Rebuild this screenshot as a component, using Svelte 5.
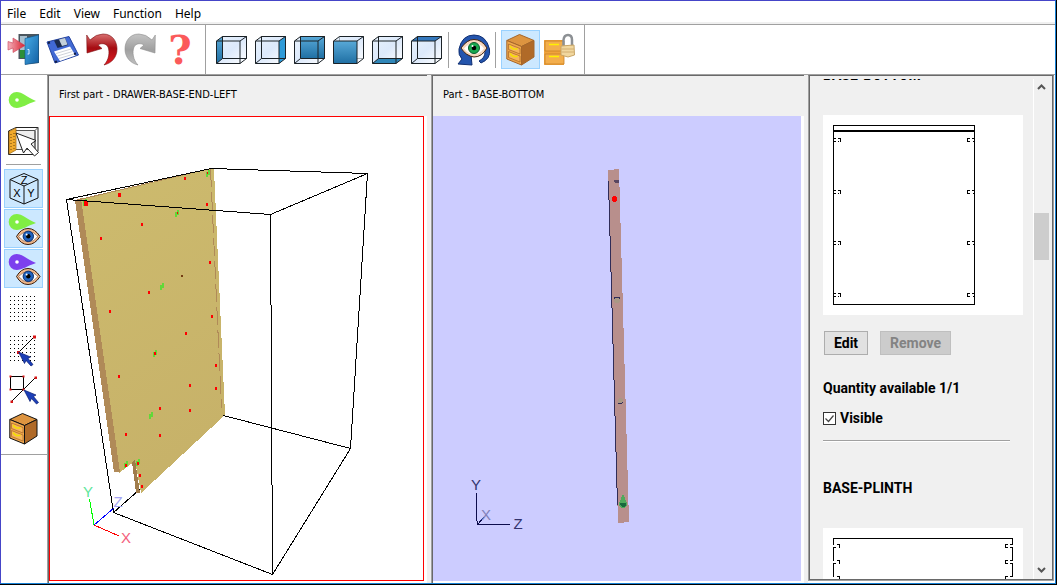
<style>
:global(body) {
  margin: 0;
}

.desktop {
  box-sizing: border-box;
  height: 100vh;
  padding: 0 1px 1px 0;
  background: #000;
  overflow: hidden;
}

.window {
  box-sizing: border-box;
  height: 100%;
  display: flex;
  flex-direction: column;
  border: 1px solid #4545c8;
  border-right-color: #1883d7;
  border-bottom-color: #1883d7;
  background: #fff;
  color: #000;
  font-family: 'Noto Sans', 'Open Sans', sans-serif;
  font-size: 12px;
}

button {
  box-sizing: border-box;
  margin: 0;
  font: inherit;
  color: inherit;
}

.menu {
  display: flex;
  gap: 13px;
  flex: none;
  align-items: center;
  box-sizing: border-box;
  height: 23px;
  padding: 4px 6px 0;
  border-bottom: 2px solid #f0f0f0;
}

.menu button {
  padding: 0;
  border: 0;
  background: none;
  line-height: 16px;
}

.toolbar {
  display: flex;
  flex: none;
  align-items: center;
  box-sizing: border-box;
  height: 51px;
  border-top: 1px solid #a0a0a0;
  border-bottom: 1px solid #a0a0a0;
}

.group {
  display: flex;
  align-items: center;
  align-self: stretch;
  padding: 0 5px 0 6px;
  border-right: 1px solid #a0a0a0;
}

.group:first-child {
  padding: 0 6px 0 3px;
}

.divider {
  width: 1px;
  height: 36px;
  margin: 0 5px 0 2px;
  background: #a0a0a0;
}

.tool {
  display: flex;
  width: 39px;
  height: 39px;
  padding: 3px;
  border: 1px solid transparent;
  background: none;
}

.tool.active {
  border-color: #99d1ff;
  background: #cce8ff;
}

.tool svg {
  width: 31px;
  height: 31px;
  overflow: visible;
}

.question {
  font: bold 40px 'DejaVu Serif', serif;
  text-anchor: middle;
  fill: #fb5a5a;
}

.axis {
  font: 11px 'Liberation Sans', sans-serif;
  text-anchor: middle;
}

main {
  display: grid;
  grid-template-columns: 46px minmax(0, 380fr) 4px minmax(0, 373fr) 4px 247px;
  grid-template-rows: minmax(0, 1fr);
  flex: 1;
  min-height: 0;
}

.side {
  display: flex;
  flex-direction: column;
  gap: 1px;
  align-self: start;
  padding: 6px 3px;
  border-bottom: 1px solid #a0a0a0;
}

.side hr {
  width: 35px;
  margin: 3px 2px;
  border: 0;
  border-top: 1px solid #a0a0a0;
}

.gutter {
  background: #f0f0f0;
}

.panel {
  display: flex;
  flex-direction: column;
  min-height: 0;
  padding: 0 0 2px;
  border-top: 1px solid #696969;
  border-left: 1px solid #a0a0a0;
  box-shadow: inset 1px 0 #696969;
}

.panel h2 {
  flex: none;
  height: 40px;
  box-sizing: border-box;
  margin: 0 0 0 1px;
  padding: 9px 10px;
  background: #f0f0f0;
  font-family: 'DejaVu Sans Condensed', 'DejaVu Sans', sans-serif;
  font-size: 11px;
  font-weight: 400;
  line-height: 20px;
  white-space: nowrap;
}

.view {
  flex: 1;
  min-height: 0;
  margin: 0 3px 0 1px;
}

.view svg {
  display: block;
  width: 100%;
  height: 100%;
}

.view.selected {
  border: 1px solid #f00;
}

.view.lilac {
  background: #ccf;
}

.view text {
  font: 15px 'Liberation Sans', sans-serif;
  text-anchor: middle;
}

.parts {
  display: flex;
  min-height: 0;
  margin: 0 1px 2px 0;
  border: 1px solid #a0a0a0;
  border-top-color: #696969;
  box-shadow: inset 1px 0 #696969, inset -1px -1px #696969;
  background: #f0f0f0;
}

.list {
  flex: 1;
  min-width: 0;
  margin: 3px 0 1px 3px;
  padding: 0 11px;
  overflow-y: scroll;
  scrollbar-width: none;
  border-right: 1px solid #fff;
  font-family: Roboto, 'Liberation Sans', sans-serif;
  font-size: 14px;
  font-weight: 700;
  line-height: 16px;
}

.list h3 {
  margin: 0 0 32px;
  font-size: 14px;
}

.drawing {
  display: block;
  width: 200px;
  height: 200px;
  background: #fff;
}

.actions {
  display: flex;
  gap: 12px;
  margin: 16px 1px 25px;
}

.actions button {
  height: 24px;
  padding: 0 9px;
  border: 1px solid #adadad;
  background: #e1e1e1;
  line-height: 16px;
}

.actions button:disabled {
  border-color: #bfbfbf;
  background: #ccc;
  color: #838383;
}

.list p {
  margin: 0 0 14px;
}

.list label {
  display: flex;
  gap: 4px;
  align-items: center;
}

.list input {
  appearance: none;
  width: 13px;
  height: 13px;
  margin: 0;
  border: 1px solid #333;
  background: #fff;
}

.list input:checked {
  background: #fff url("data:image/svg+xml,%3Csvg xmlns='http://www.w3.org/2000/svg' viewBox='0 0 11 11'%3E%3Cpath d='M1.5 5.5l3 3 5-6' fill='none' stroke='%23444' stroke-width='1.2'/%3E%3C/svg%3E");
}

.list hr {
  margin: 14px 12px 38px 0;
  border: 0;
  border-top: 1px solid #a0a0a0;
  border-bottom: 1px solid #fff;
}

.scroll {
  display: grid;
  grid-template-rows: 17px 118fr 47px 301fr 17px;
  flex: none;
  width: 15px;
  margin: 2px 4px 2px 0;
}

.scroll i {
  background: #cdcdcd;
}

.scroll button {
  display: flex;
  align-items: center;
  justify-content: center;
  padding: 0;
  border: 0;
  background: none;
}

.scroll svg {
  width: 9px;
  height: 8px;
}
</style>

<script>
import { onMount } from 'svelte';

const menus = ['File', 'Edit', 'View', 'Function', 'Help'];

const fileTools = ['exit', 'save', 'undo', 'redo', 'help'];

const cubeFaces = {
  left: { points: '.5,7 6.5,2.5 6.5,24.5 .5,29.5', fill: 'url(#deep)' },
  right: { points: '24,7 30.5,2.5 30.5,24.5 24,29.5', fill: '#2f9bd8' },
  back: { points: '6.5,2.5 30.5,2.5 30.5,24.5 6.5,24.5', fill: 'url(#deep)' },
  front: { points: '.5,7 24,7 24,29.5 .5,29.5', fill: 'url(#deep)' },
  bottom: { points: '.5,29.5 6.5,24.5 30.5,24.5 24,29.5', fill: '#2f86b8' },
  top: { points: '.5,7 6.5,2.5 30.5,2.5 24,7', fill: '#3478bd' }
};

const sideTools = [
  { name: 'drill' },
  { name: 'pick-face', last: true },
  { name: 'axes', active: true },
  { name: 'show-drill', active: true },
  { name: 'show-other', active: true },
  { name: 'grid' },
  { name: 'snap-grid' },
  { name: 'snap-points' },
  { name: 'cabinet-outlined' }
];

const steps = [0, 4, 8, 12, 16, 20, 24];

const greenHoles = [
  [85, 202], [208, 173], [177, 213], [162, 286], [155, 353],
  [151, 415], [126, 464], [138, 462]
];

const redHoles = [
  [85, 202, 4], [119, 194, 3], [185, 178], [207, 204], [142, 224], [101, 238],
  [210, 262], [149, 292], [110, 311], [212, 316], [186, 333],
  [155, 353], [119, 376], [216, 365], [216, 388], [190, 385], [160, 408],
  [190, 410], [126, 434], [160, 435], [126, 465], [138, 463], [140, 475],
  [142, 486], [178, 213, 1], [208, 173, 1]
];

let list;
let visible = true;

onMount(() => {
  list.scrollTop = 12;
});
</script>

{#snippet tear(color, cy)}
  <path d="M8.7 {cy - 8}C14 {cy - 8} 19 {cy - 3} 28 {cy + 1}C19 {cy + 4} 14 {cy + 8} 8.7 {cy + 8}A8 8 0 0 1 8.7 {cy - 8}Z" fill={color} />
  <circle cx="9" cy={cy} r="1.8" fill="#fff" />
{/snippet}

{#snippet eye()}
  <path d="M8.5 23.5Q13 15.5 20 15.5Q27 15.5 32 23.5Q27 31.5 20 31.5Q13 31.5 8.5 23.5Z" fill="#f2b98c" stroke="#3a1c0a" />
  <path d="M10.5 23.5Q15 18.5 20 18.5Q26 18.5 30 23.5Q26 29 20 29Q15 29 10.5 23.5Z" fill="#fff" stroke="#6b3a1c" stroke-width=".6" />
  <circle cx="20.3" cy="23.3" r="5.2" fill="#1f63c0" stroke="#0b2a66" />
  <circle cx="20.3" cy="23.3" r="2.2" />
  <circle cx="18.6" cy="21.5" r="1" fill="#fff" />
{/snippet}

{#snippet cabinet(line)}
  <g stroke={line} stroke-linejoin="round">
    <path d="M1.8 6.5L14.5.5L29 6.5L16.5 12.5Z" fill="#dd9440" />
    <path d="M1.8 6.5L16.5 12.5V31L1.8 25Z" fill="#f0a84e" />
    <path d="M29 6.5L16.5 12.5V31L29 23Z" fill="#b06a28" />
  </g>
  <path d="M3.5 10L15 14.5V20L3.5 15.5ZM3.5 17.5L15 22V28L3.5 23.5Z" fill="#f6b45e" stroke="#a86424" stroke-width=".7" />
  <path d="M5 12Q8 16.5 12.5 14.5M5 19.5Q8 24 12.5 22" fill="none" stroke="#f5e000" stroke-width="1.4" />
{/snippet}

{#snippet pointer(x, y)}
  <path transform="translate({x} {y})" d="M0 0L12 5L9.5 6.5L14.5 12.5L12.5 14L7.5 8.5L6 11.5Z" fill="#1c3fb8" stroke="#0a1c70" stroke-width=".7" />
{/snippet}

{#snippet dots()}
  {#each steps as x}
    {#each steps as y}
      <rect x={x + 2} y={y + 3} width="1" height="1" />
    {/each}
  {/each}
{/snippet}

{#snippet icon(name)}
  <svg viewBox="0 0 31 31" aria-hidden="true">
    {#if name === 'exit'}
      <path d="M10.5 0H31V29L17 30.5V25H10.5Z" fill="#4b565e" />
      <path d="M12 2H19V16H12Z" fill="#a9c0cf" />
      <path d="M12 16H17V24H12Z" fill="#2c8f38" />
      <path d="M17 4.5L30.5 1V28.5L17 30.5Z" fill="url(#door)" stroke="#0f5288" stroke-width=".6" />
      <path d="M19.5 15.5H21V20H19.5" fill="none" stroke="#d8efff" />
      <path d="M0 7.5L5 9V4L17 11.5L5 18.5V14L0 16Z" fill="url(#arrow)" stroke="#c94055" stroke-width=".6" />
    {:else if name === 'save'}
      <path d="M0 8L22 2.5L31.5 21L8 29Z" fill="#4169d4" stroke="#2443a0" />
      <path d="M7 6.5L18 4L21 11L10.5 14Z" fill="#1b2b4e" />
      <path d="M12 5.5L18 4L20.5 10.5L15 12Z" fill="#c3d0da" />
      <path d="M7 17.5L23 12.5L28.5 21.5L13 27Z" fill="#fff" />
      <path d="M9 19.5L24 15M10.5 22L25.5 17.5M12 24.5L27 20" stroke="#b9bfc9" stroke-width=".7" />
      <path d="M1 9l2-.5M27 20l2-.5M8 28l2-.6" stroke="#101c44" stroke-width="2" />
    {:else if name === 'undo'}
      <path d="M.7 1L4 6Q10 0 17 0C27 0 31 8 31 15C31 23 26 29 18 31C23 26 24 18 22 13C20 9 15 9 12 11L16 14.5L1 19Z" fill="url(#red)" stroke="#7c0d10" stroke-width=".6" />
    {:else if name === 'redo'}
      <path transform="translate(31) scale(-1 1)" d="M.7 1L4 6Q10 0 17 0C27 0 31 8 31 15C31 23 26 29 18 31C23 26 24 18 22 13C20 9 15 9 12 11L16 14.5L1 19Z" fill="url(#grey)" stroke="#8d8d8d" stroke-width=".6" />
    {:else if name === 'help'}
      <text class="question" x="16" y="30">?</text>
    {:else if cubeFaces[name]}
      <path d="M.5 7L6.5 2.5H30.5V24.5L24 29.5H.5Z" fill="url(#pale)" />
      <polygon points={cubeFaces[name].points} fill={cubeFaces[name].fill} />
      <path d="M6.5 2.5H30.5V24.5H6.5ZM.5 29.5L6.5 24.5" fill="none" stroke="#1b2227" opacity={name === 'front' ? 0.35 : 1} />
      {#if name === 'front'}
        <polygon points={cubeFaces.front.points} fill="url(#deep)" />
      {/if}
      <path d="M.5 7H24V29.5H.5ZM.5 7L6.5 2.5H30.5L24 7M30.5 2.5V24.5L24 29.5" fill="none" stroke="#1b2227" />
    {:else if name === 'look'}
      <path d="M1 15Q4 1 16 1Q28 1 31.5 15Q33 25 23 29L21 27Q27 24 27 18L16 7L7 13L8 20L13 21L14 31L0 30L4 25Q0 21 1 15Z" fill="#2455ad" stroke="#102f72" />
      <path d="M3 14Q9 5.5 16 5.5Q24 5.5 29 14Q24 23 16 23Q8 22 3 14Z" fill="#f6d7bd" stroke="#43240e" />
      <path d="M6 14.5Q11 9 16 9Q22 9 26 14.5Q22 20 16 20Q10 20 6 14.5Z" fill="#fff" />
      <circle cx="16" cy="14" r="5.5" fill="#18a94e" stroke="#0b5b29" />
      <circle cx="16" cy="14" r="2.3" />
      <circle cx="14.5" cy="12" r="1" fill="#fff" />
    {:else if name === 'cabinet'}
      {@render cabinet('#a5662a')}
    {:else if name === 'locked'}
      <path d="M0 6H20V31H0Z" fill="#f0a33c" />
      <path d="M1 7H20V17H1ZM1 20H20V30H1Z" fill="#f3ae4c" stroke="#c98024" stroke-width=".8" />
      <path d="M5 10.5H15M5 22.5H15" stroke="#fff000" stroke-width="1.5" />
      <path d="M19.5 14V6Q20 1 24 1Q28 1 28 6V14" fill="none" stroke="#8c9094" stroke-width="2.5" />
      <path d="M17 12L30 11L30.5 21L24 23L17 21Z" fill="#f1d79e" stroke="#c8a566" />
      <path d="M17.5 15H30M17.5 18H30" stroke="#d3ae70" />
    {:else if name === 'drill'}
      {@render tear('#80ee44', 15)}
    {:else if name === 'show-drill'}
      {@render tear('#80ee44', 9)}
      {@render eye()}
    {:else if name === 'show-other'}
      {@render tear('#7c40ee', 9)}
      {@render eye()}
    {:else if name === 'pick-face'}
      <path d="M.5 6L8 2.5H30V26L27 29.5H.5Z" fill="#fff" stroke="#222" />
      <path d="M8 5.5H27V24.5H8M27 5.5L30 2.5M27 5.5V29.5" fill="#eee" stroke="#555" />
      <path d="M1 6.5L8 3V25L1 29Z" fill="#f0a92c" stroke="#9c6510" stroke-width=".7" />
      <path d="M3 9V27M6 8V25" stroke="#6d4708" stroke-dasharray="1 2" />
      <path d="M8 8L28 15.5L23 19L30.5 27.5L26.5 31L19 23L15.5 28Z" fill="#fff" stroke="#222" />
    {:else if name === 'axes'}
      <path d="M16 .5L30 6.5V25L16 31L2 25V6.5ZM2 6.5L16 13L30 6.5M16 13V31" fill="none" stroke="#111" />
      <text class="axis" x="16" y="11">Z</text>
      <text class="axis" x="9" y="24">X</text>
      <text class="axis" x="23" y="24">Y</text>
    {:else if name === 'grid'}
      {@render dots()}
    {:else if name === 'snap-grid'}
      {@render dots()}
      <path d="M26.5 3.5L10.5 19.5" stroke="#000" />
      <path d="M25 2.5h3v3h-3zM9 18h3v3h-3z" fill="#d81414" />
      {@render pointer(10.5, 19)}
    {:else if name === 'snap-points'}
      <path d="M2.5 3.5H15.5V16.5H2.5ZM27.5 4.5L3.5 28.5" fill="none" stroke="#000" />
      <path d="M1.5 2.5h2v2h-2zM14.5 2.5h2v2h-2zM1.5 15.5h2v2h-2zM14.5 15.5h2v2h-2zM26.5 3.5h2.5v2.5h-2.5zM2.5 27.5h2.5v2.5h-2.5z" fill="#d81414" />
      {@render pointer(16, 17)}
    {:else if name === 'cabinet-outlined'}
      {@render cabinet('#111')}
    {/if}
  </svg>
{/snippet}

<div class="desktop">
  <div class="window">
    <nav class="menu">
      {#each menus as menu}
        <button>{menu}</button>
      {/each}
    </nav>

    <div class="toolbar">
      <div class="group">
        {#each fileTools as name}
          <button class="tool" aria-label={name}>{@render icon(name)}</button>
        {/each}
      </div>
      <div class="group">
        {#each Object.keys(cubeFaces) as name}
          <button class="tool" aria-label={name}>{@render icon(name)}</button>
        {/each}
        <div class="divider"></div>
        <button class="tool" aria-label="look">{@render icon('look')}</button>
        <div class="divider"></div>
        <button class="tool active" aria-label="cabinet">{@render icon('cabinet')}</button>
        <button class="tool" aria-label="locked">{@render icon('locked')}</button>
      </div>
    </div>

    <main>
      <div class="side">
        {#each sideTools as tool}
          <button class="tool" class:active={tool.active} aria-label={tool.name}>{@render icon(tool.name)}</button>
          {#if tool.last}
            <hr />
          {/if}
        {/each}
      </div>

      <section class="panel">
        <h2>First part - DRAWER-BASE-END-LEFT</h2>
        <div class="view selected">
          <svg viewBox="50 117 373 463" shape-rendering="crispEdges">
            <defs>
              <linearGradient id="deep" x2="0" y2="1"><stop stop-color="#58a9d8" /><stop offset="1" stop-color="#1f6fa3" /></linearGradient>
              <linearGradient id="pale" x2="1" y2="1"><stop stop-color="#e8f2fc" /><stop offset=".5" stop-color="#dce9fb" /><stop offset="1" stop-color="#fff" /></linearGradient>
              <linearGradient id="door" x2="1" y2="1"><stop stop-color="#49aee8" /><stop offset="1" stop-color="#1260a4" /></linearGradient>
              <linearGradient id="arrow" x2="1" y2="0"><stop stop-color="#f3b0ba" /><stop offset="1" stop-color="#d9202f" /></linearGradient>
              <linearGradient id="red" x2="0" y2="1"><stop stop-color="#d87070" /><stop offset=".45" stop-color="#a60c12" /><stop offset="1" stop-color="#e01a20" /></linearGradient>
              <linearGradient id="grey" x2="0" y2="1"><stop stop-color="#c4c4c4" /><stop offset=".5" stop-color="#a0a0a0" /><stop offset="1" stop-color="#c0c0c0" /></linearGradient>
              <linearGradient id="wood" x2="0.3" y2="1"><stop stop-color="#cdbb6e" /><stop offset="1" stop-color="#c7b269" /></linearGradient>
            </defs>
            <path d="M113.5 512.5L223.5 415.5" stroke="#000" />
            <path d="M75 200L211 168L214 170L81 202Z" fill="#b08a58" />
            <path d="M80 200L210 169L214 169L218 260L225 415L141 493L135 461L119 473Z" fill="url(#wood)" />
            <path d="M75 200L81 198L120 472L114 472Z" fill="#b08a58" />
            <path d="M132 462L135 460L140 493L136 493Z" fill="#a07c4c" />
            <path d="M210.5 169L221.5 408" fill="none" stroke="#b08a58" stroke-dasharray="18 5" />
            {#each greenHoles as [x, y]}
              <path d="M{x - 2} {y - 1}h2v-2h2v5h-2v2h-2z" fill="#62d838" />
            {/each}
            {#each redHoles as [x, y, size = 2]}
              <rect x={x - 1} y={y - 1} width={size} height={size + 1} fill="#f00" />
            {/each}
            <rect x="181" y="275" width="2" height="2" fill="#733c12" />
            <path d="M66.5 199.5L211.5 168.5L367.5 173.5L270.5 214.5ZM66.5 199.5L113.5 512.5L272.5 574.5L350.5 448.5L223.5 415.5M367.5 173.5L350.5 448.5M270.5 214.5L272.5 574.5" fill="none" stroke="#000" />
            <path d="M94 525L89.5 499" stroke="#0f0" />
            <path d="M94 525L119 536" stroke="#f00" />
            <path d="M94 525L114 508" stroke="#00f" />
            <text x="88" y="497" fill="#5ce69a">Y</text>
            <text x="118" y="507" fill="#a4a4f4">Z</text>
            <text x="126" y="543" fill="#f4607c">X</text>
          </svg>
        </div>
      </section>
      <div class="gutter"></div>

      <section class="panel">
        <h2>Part - BASE-BOTTOM</h2>
        <div class="view lilac">
          <svg viewBox="433 116 368 465" shape-rendering="crispEdges">
            <path d="M608 170L619 169L629 522L618 523Z" fill="#b88f8c" />
            <path d="M608.5 181L617.5 505" stroke="#302c58" />
            <path d="M614 180h5v3h-4z" fill="#594660" />
            <circle cx="614.5" cy="199" r="3" fill="#f00" />
            <circle cx="617" cy="300" r="3" fill="#a99886" />
            <path d="M614 299v-1l1-1h4l1 2" fill="none" stroke="#302c58" />
            <circle cx="620.5" cy="401" r="3" fill="#a99886" />
            <path d="M618 403h4l1-1" fill="none" stroke="#302c58" />
            <path d="M623 494L627 503Q627 508 623 508Q619 508 619 503Z" fill="#4faa5c" />
            <path d="M620 503h6v2l-2 2h-2l-2-2z" fill="#17693c" />
            <path d="M476.5 493V518L477.5 524.5H510M478 524L484 517" fill="none" stroke="#0c0c4c" />
            <text x="476" y="490" fill="#33336c">Y</text>
            <text x="486" y="520" fill="#8080b8">X</text>
            <text x="518" y="529" fill="#33336c">Z</text>
          </svg>
        </div>
      </section>
      <div class="gutter"></div>

      <aside class="parts">
        <div class="list" bind:this={list}>
          <h3>BASE-BOTTOM</h3>
          <svg class="drawing" viewBox="0 0 200 200" shape-rendering="crispEdges">
            <path d="M10.5 10.5H151.5V189.5H10.5Z" fill="none" stroke="#000" />
            <path d="M10 16H152" stroke="#000" stroke-width="2" />
            {#each [25, 77, 128, 180] as y}
              <path d="M11 {y - 1.5}h2M15 {y - 1.5}h2.5v3M11 {y + 1.5}h2M15 {y + 1.5}h1M147 {y - 1.5}h-2.5v3h2M149 {y - 1.5}h2M150 {y + 1.5}h1" fill="none" stroke="#000" />
            {/each}
          </svg>
          <div class="actions">
            <button>Edit</button>
            <button disabled>Remove</button>
          </div>
          <p>Quantity available 1/1</p>
          <label><input type="checkbox" bind:checked={visible} />Visible</label>
          <hr />
          <h3>BASE-PLINTH</h3>
          <svg class="drawing" viewBox="0 0 200 200" shape-rendering="crispEdges">
            <path d="M10.5 10.5H189.5V189.5H10.5Z" fill="none" stroke="#000" />
            {#each [18, 34, 50] as y}
              <path d="M10.5 {y - 1}v2M189.5 {y - 1}v2" stroke="#fff" />
              <path d="M11 {y + 1.5}h2M14 {y - 1.5}h2.5v3M185 {y - 1.5}h-2.5v3h2M187 {y - 1.5}h2M187 {y + 1.5}h2" fill="none" stroke="#000" />
            {/each}
          </svg>
        </div>
        <div class="scroll">
          <button aria-label="Scroll up"><svg viewBox="0 0 9 8"><path d="M1 6L4.5 2.5L8 6" fill="none" stroke="#555" stroke-width="2" /></svg></button>
          <span></span>
          <i></i>
          <span></span>
          <button aria-label="Scroll down"><svg viewBox="0 0 9 8"><path d="M1 2L4.5 5.5L8 2" fill="none" stroke="#555" stroke-width="2" /></svg></button>
        </div>
      </aside>
    </main>
  </div>
</div>
